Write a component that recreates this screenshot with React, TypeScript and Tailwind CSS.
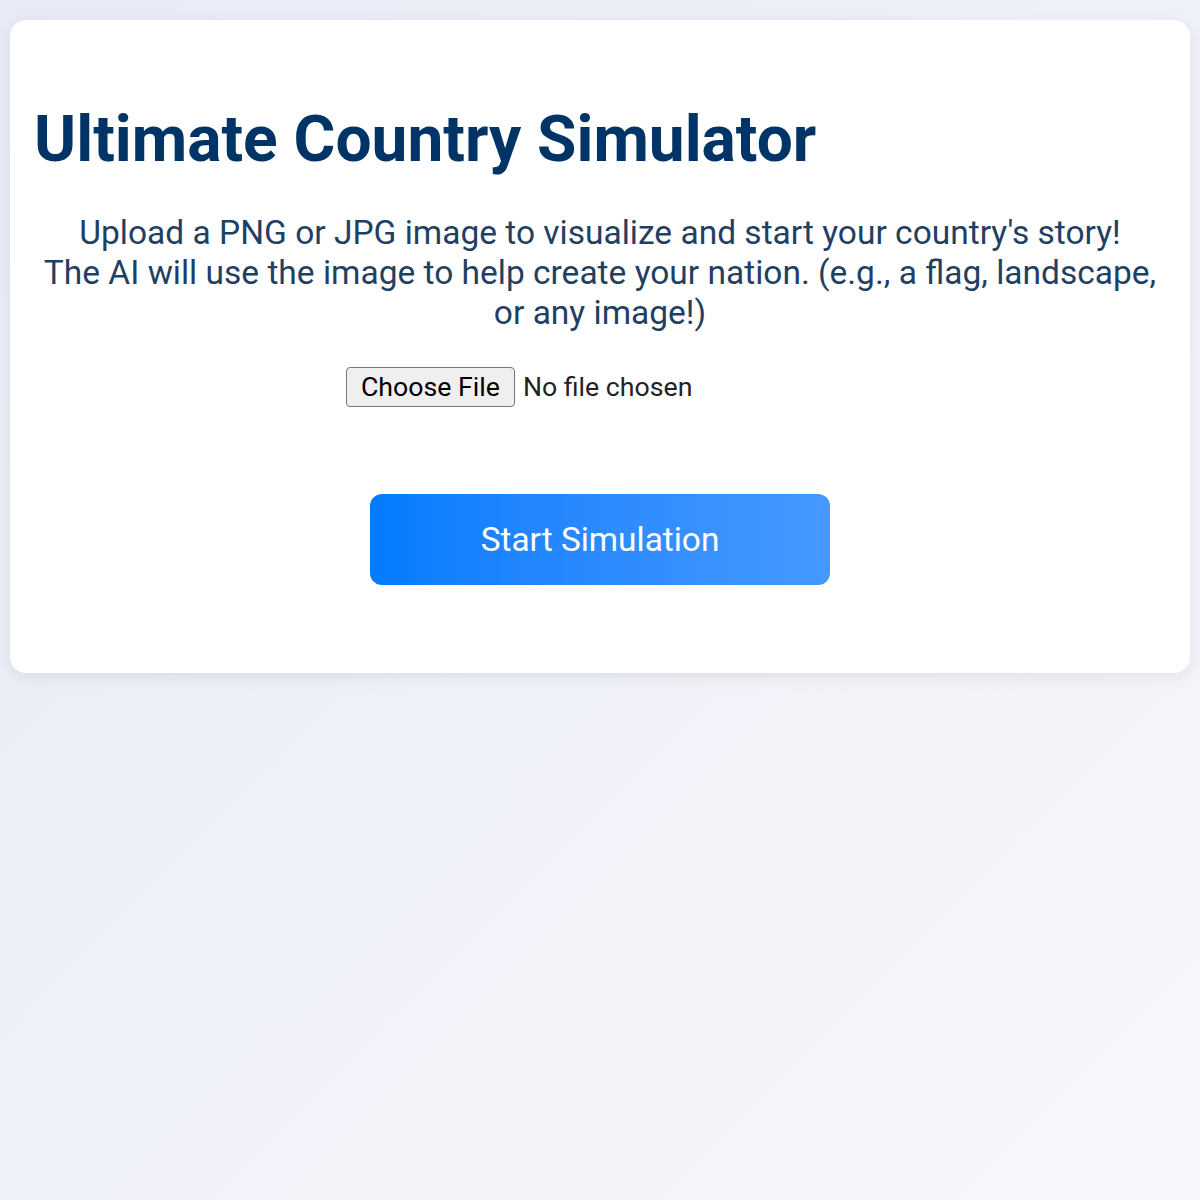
import React from 'react';

export default function App() {
  return (
    <div
      className="min-h-[1200px] w-full bg-gradient-to-br from-[#e8eaf6] to-[#f7f8fb] pt-[20px] px-[10px]"
      style={{ fontFamily: 'Roboto, "Liberation Sans", sans-serif' }}
    >
      <div className="rounded-[16px] bg-white px-[24px] pt-[82px] pb-[88px] shadow-[0_4px_16px_rgba(0,0,0,0.08)]">
        <h1 className="text-[64px] font-bold leading-[1.2] text-[#003366]">
          Ultimate Country Simulator
        </h1>
        <p className="mt-[34px] text-center text-[33.5px] leading-[40px] text-[#1f3f63]">
          Upload a PNG or JPG image to visualize and start your country's story!
          <br />
          The AI will use the image to help create your nation. (e.g., a flag, landscape, or any image!)
        </p>
        <div className="mt-[34px] flex justify-center">
          <input
            type="file"
            accept="image/png, image/jpeg"
            className="w-[508px] text-[26.7px] leading-[36px] text-[#222] file:mr-[8px] file:h-[40px] file:rounded-[4px] file:border file:border-solid file:border-[#767676] file:bg-[#efefef] file:px-[14px] file:py-0 file:text-black"
          />
        </div>
        <div className="mt-[87px] flex justify-center">
          <button className="h-[91px] w-[460px] rounded-[12px] bg-gradient-to-r from-[#007bff] to-[#4499ff] pt-[2px] text-[33.4px] text-white">
            Start Simulation
          </button>
        </div>
      </div>
    </div>
  );
}
